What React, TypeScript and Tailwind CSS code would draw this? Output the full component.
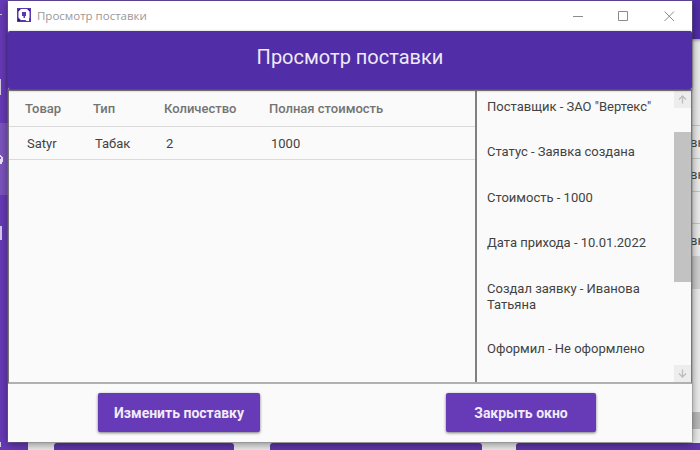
import React from "react";

const columns = [
  { title: "Товар", value: "Satyr", width: "w-[68px]" },
  { title: "Тип", value: "Табак", width: "w-[71px]" },
  { title: "Количество", value: "2", width: "w-[105px]" },
  { title: "Полная стоимость", value: "1000", width: "w-[180px]" },
];

const details = [
  { text: 'Поставщик - ЗАО "Вертекс"', height: "h-[45px]" },
  { text: "Статус - Заявка создана", height: "h-[46px]" },
  { text: "Стоимость - 1000", height: "h-[45px]" },
  { text: "Дата прихода - 10.01.2022", height: "h-[46px]" },
  { text: "Создал заявку - Иванова Татьяна", height: "h-[60px]" },
  { text: "Оформил - Не оформлено", height: "h-[20px]" },
];

function Backdrop() {
  return (
    <div className="flex h-full w-full overflow-hidden bg-[#ececec]">
      <div className="flex w-7 shrink-0 flex-col bg-[#673ab7]">
        <div className="flex h-[123px] flex-col">
          <div className="mt-[14px] h-px w-[2px] bg-[#cfc2e8]" />
          <div className="mt-[64px] h-4 w-px bg-[#d6cbea]" />
        </div>
        <div className="h-[72px] bg-[#7b54be]">
          <svg className="mt-[31px] block" width="4" height="12" viewBox="0 0 4 12">
            <path d="M0 1h1v1h1v1h1v5H2v2H0V5h1V3H0z" fill="#ece6f5" />
          </svg>
        </div>
        <div className="flex flex-1 flex-col">
          <div className="mt-[31px] h-[14px] w-[2px] bg-[#d6cbea]" />
          <div className="mt-auto mb-[3px] h-[5px] w-px bg-[#d6cbea]" />
        </div>
      </div>
      <div className="flex flex-1 flex-col">
        <div className="h-[39px] shrink-0 bg-[#512da8] shadow-[0_1px_3px_#0006]" />
        <div className="flex h-[404px] shrink-0 flex-col items-end pt-[86px] font-[Roboto,sans-serif] text-[13px] leading-5 text-[#444]">
          <div className="h-[33px] w-[16px] shrink-0 border-t border-[#c6c6c6] pt-[7px]">вн</div>
          <div className="h-[33px] w-[16px] shrink-0 border-t border-[#c6c6c6] pt-[6px]">вн</div>
          <div className="h-8 w-[16px] shrink-0 border-t border-[#c6c6c6]" />
          <div className="h-[33px] w-[16px] shrink-0 border-t border-[#c6c6c6] pt-[7px]">вн</div>
          <div className="h-[33px] w-[16px] shrink-0 bg-[#d0d0d0]" />
          <div className="mt-[123px] h-[17px] w-[16px] shrink-0 bg-[#bababa]" />
        </div>
        <div className="flex pl-[26px]">
          <div className="h-3 w-[180px] shrink-0 rounded-t-[3px] bg-[#6036ab]" />
          <div className="ml-9 h-3 w-[212px] shrink-0 rounded-t-[3px] bg-[#6036ab]" />
          <div className="ml-[34px] h-3 w-[190px] shrink-0 rounded-tl-[3px] bg-[#6036ab]" />
        </div>
      </div>
    </div>
  );
}

function TitleBar() {
  return (
    <div className="flex h-[30px] shrink-0 items-center bg-white pl-[9px]">
      <svg className="mb-[2px] shrink-0" width="14" height="14" viewBox="0 0 14 14">
        <rect width="14" height="14" fill="#5e35b1" />
        <path d="M1 2h1V1h1v1H2v1H1zM1 11h1v1h1v1H1zM11 1h1v1h1v1h-1V2h-1z" fill="#271553" />
        <path d="M4 1h6l2.5 2.5v6l-.5 1v2.5h-2.5L8.5 12H4L1.5 9.5v-6z" fill="#fff" />
        <path d="M5 4h4v4H8v2H6.5V8H5z" fill="#5e35b1" />
      </svg>
      <span className="ml-[6px] whitespace-nowrap font-['Open_Sans',sans-serif] text-[11.5px] leading-4 text-[#999]">
        Просмотр поставки
      </span>
      <svg className="mr-[17px] mb-[2px] ml-auto" width="103" height="12" viewBox="0 0 103 12" fill="none" stroke="#8c8c8c">
        <path d="M1 7.5h10" />
        <path d="M46.5 2.5h9v9h-9z" />
        <path d="M92.5 2.5l9.5 9.5M102 2.5L92.5 12" />
      </svg>
    </div>
  );
}

function ScrollArrow({ down = false }: { down?: boolean }) {
  return (
    <div className="flex h-[17px] w-[17px] shrink-0 items-center justify-center bg-[#ededed]">
      <svg
        className={down ? "rotate-180" : ""}
        width="9"
        height="9"
        viewBox="0 0 9 9"
        fill="none"
        stroke="#bdbdbd"
        strokeWidth="1.3"
      >
        <path d="M4.5 8.5V1M1 4.5L4.5 1L8 4.5" />
      </svg>
    </div>
  );
}

function SupplyTable() {
  return (
    <div className="w-[466px] shrink-0 rounded-t-[3px] bg-[#fafafa]">
      <div className="flex h-[36px] items-center border-b border-[#dadada] pl-4 text-[13px] font-medium text-[#737373]">
        {columns.map((c) => (
          <div key={c.title} className={`${c.width} whitespace-nowrap`}>{c.title}</div>
        ))}
      </div>
      <div className="flex h-[33px] items-center border-b border-[#dadada] pt-[2px] pl-[18px] text-[13px]">
        {columns.map((c) => (
          <div key={c.title} className={c.width}>{c.value}</div>
        ))}
      </div>
    </div>
  );
}

function ActionButton({ label, width }: { label: string; width: string }) {
  return (
    <button
      className={`${width} h-[39px] rounded-[2px] bg-[#673ab7] pt-[2px] text-[14px] font-bold whitespace-nowrap text-[#f0ebf8] shadow-[0_1px_3px_#0008]`}
    >
      {label}
    </button>
  );
}

export default function App() {
  return (
    <div className="relative h-[450px] w-[700px] overflow-hidden font-[Roboto,sans-serif] text-[#424242]">
      <Backdrop />
      <div className="absolute top-0 left-[8px] flex h-[442px] w-[684px] flex-col border-t border-[#5c428f] bg-[#fafafa] shadow-[0_0_0_1px_#7775,0_2px_9px_#0007]">
        <TitleBar />
        <div className="z-10 flex h-[58px] shrink-0 items-center justify-center rounded-[2px] bg-[#512da8] pb-[6px] text-[20px] text-[#eeeaf6] shadow-[0_1px_3px_#0009]">
          Просмотр поставки
        </div>
        <div className="flex h-[295px] shrink-0 border-x border-t-2 border-b-2 border-x-[#777] border-t-[#8b8b8b] border-b-[#b0b0b0]">
          <SupplyTable />
          <div className="flex w-[216px] border-l-2 border-[#808080]">
            <div className="flex-1 pt-[8px] pl-[10px] text-[13px] leading-4">
              {details.map((d) => (
                <div key={d.text} className={`${d.height} w-[175px]`}>{d.text}</div>
              ))}
            </div>
            <div className="flex w-[17px] shrink-0 flex-col">
              <ScrollArrow />
              <div className="mt-6 h-[150px] bg-[#c2c2c2]" />
              <div className="mt-auto">
                <ScrollArrow down />
              </div>
            </div>
          </div>
        </div>
        <div className="flex flex-1 pt-[9px] pl-[90px]">
          <ActionButton label="Изменить поставку" width="w-[162px]" />
          <div className="w-[186px]" />
          <ActionButton label="Закрыть окно" width="w-[150px]" />
        </div>
      </div>
    </div>
  );
}
